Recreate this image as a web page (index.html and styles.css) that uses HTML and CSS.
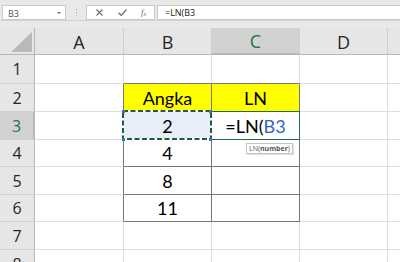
FILE: index.html
```html
<!DOCTYPE html>
<html>
<head>
<meta charset="utf-8">
<link rel="stylesheet" href="styles.css">
</head>
<body>
<div class="topbar">
  <div class="namebox"><span>B3</span><span class="caret"></span></div>
  <div class="dots"><i></i><i></i><i></i></div>
  <div class="btnbox">
    <svg class="ic" width="9" height="9" viewBox="0 0 9 9"><path d="M1.5 1.5 L7.5 7.5 M7.5 1.5 L1.5 7.5" stroke="#6b6b6b" stroke-width="1.1" fill="none"/></svg>
    <svg class="ic" width="11" height="9" viewBox="0 0 11 9"><path d="M1.5 4.8 L4.2 7.3 L9.5 1.5" stroke="#6b6b6b" stroke-width="1.2" fill="none"/></svg>
    <span class="fx">f<sub>x</sub></span>
  </div>
  <div class="formula">=LN(B3</div>
</div>
<div class="sheet">
  <div class="hd corner"><span class="tri"></span></div>
  <div class="hd col">A</div>
  <div class="hd col">B</div>
  <div class="hd col sel-col">C</div>
  <div class="hd col">D</div>
  <div class="hd col last"></div>

  <div class="hd row">1</div>
  <div class="c"></div>
  <div class="c tb-bottom"></div>
  <div class="c tb-bottom"></div>
  <div class="c"></div>
  <div class="c last"></div>

  <div class="hd row">2</div>
  <div class="c tb-right"></div>
  <div class="c tb yellow">Angka</div>
  <div class="c tb yellow">LN</div>
  <div class="c"></div>
  <div class="c last"></div>

  <div class="hd row sel-row">3</div>
  <div class="c tb-right"></div>
  <div class="c tb ref">2
    <svg class="ants" width="91" height="31" viewBox="0 0 91 31">
      <rect x="1" y="1" width="88" height="28" fill="none" stroke="#ffffff" stroke-width="2"/>
      <rect x="1" y="1" width="88" height="28" fill="none" stroke="#215c3f" stroke-width="2" stroke-dasharray="5 2.5"/>
      <rect x="0" y="0" width="3" height="3" fill="#3a6fd0"/>
      <rect x="87" y="0" width="3" height="3" fill="#3a6fd0"/>
      <rect x="0" y="28" width="3" height="3" fill="#3a6fd0"/>
      <rect x="87" y="28" width="3" height="3" fill="#3a6fd0"/>
    </svg>
  </div>
  <div class="c tb active"><span>=LN(</span><span class="blue">B3</span>
    <div class="tip">LN(<b>number</b>)</div>
  </div>
  <div class="c"></div>
  <div class="c last"></div>

  <div class="hd row">4</div>
  <div class="c tb-right"></div>
  <div class="c tb">4</div>
  <div class="c tb"></div>
  <div class="c"></div>
  <div class="c last"></div>

  <div class="hd row">5</div>
  <div class="c tb-right"></div>
  <div class="c tb">8</div>
  <div class="c tb"></div>
  <div class="c"></div>
  <div class="c last"></div>

  <div class="hd row">6</div>
  <div class="c tb-right"></div>
  <div class="c tb">11</div>
  <div class="c tb"></div>
  <div class="c"></div>
  <div class="c last"></div>

  <div class="hd row">7</div>
  <div class="c"></div>
  <div class="c"></div>
  <div class="c"></div>
  <div class="c"></div>
  <div class="c last"></div>

  <div class="hd row">8</div>
  <div class="c"></div>
  <div class="c"></div>
  <div class="c"></div>
  <div class="c"></div>
  <div class="c last"></div>
</div>
</body>
</html>
```

FILE: styles.css
```css
* { box-sizing: border-box; }
html, body {
  margin: 0;
  padding: 0;
  width: 400px;
  height: 262px;
  overflow: hidden;
  background: #ffffff;
  font-family: "Open Sans", "Noto Sans", sans-serif;
}
.topbar {
  height: 28px;
  background: #e9e9e9;
  display: flex;
  align-items: flex-start;
  padding-top: 5px;
  position: relative;
}
.topbar::after {
  content: "";
  position: absolute;
  left: 0; right: 0; top: 20px;
  height: 1px;
  background: #d4d4d4;
}
.namebox {
  margin-left: 2px;
  width: 64px;
  height: 15px;
  background: #fff;
  border: 1px solid #c9c9c9;
  display: flex;
  align-items: center;
  justify-content: space-between;
  padding: 1px 4px 0 5px;
  font-size: 9px;
  color: #555;
}
.caret {
  width: 0; height: 0;
  border-left: 2px solid transparent;
  border-right: 2px solid transparent;
  border-top: 2px solid #666;
}
.dots {
  width: 20px;
  height: 15px;
  display: flex;
  flex-direction: column;
  align-items: center;
  justify-content: center;
  gap: 2px;
}
.dots i {
  display: block;
  width: 1px;
  height: 1px;
  background: #aaa;
}
.btnbox {
  width: 69px;
  height: 15px;
  background: #fff;
  border: 1px solid #c9c9c9;
  display: flex;
  align-items: center;
  padding-left: 8px;
  gap: 13px;
}
.fx {
  font-family: "Liberation Serif", serif;
  font-style: italic;
  font-size: 9px;
  color: #666;
  line-height: 1;
}
.fx sub { font-size: 6px; vertical-align: -1px; }
.formula {
  flex: 1;
  margin-left: 2px;
  height: 15px;
  background: #fff;
  border: 1px solid #c9c9c9;
  border-right: none;
  font-size: 9px;
  color: #222;
  padding: 1px 0 0 7px;
  line-height: 12px;
}
.sheet {
  display: grid;
  grid-template-columns: 35px 89px 88px 88px 88px 1fr;
  grid-template-rows: 27px 29px 28px 28px 27px 28px 27px 28px 28px;
}
.hd {
  background: #e6e6e6;
  color: #262626;
  font-size: 16px;
  display: flex;
  align-items: center;
  justify-content: center;
  border-right: 1px solid #cfcfcf;
  border-bottom: 1px solid #cfcfcf;
}
.hd.col { padding-top: 1px; font-size: 18px; }
.hd.row { border-right-color: #b7b7b7; }
.corner { position: relative; border-right-color: #b7b7b7; border-bottom-color: #b7b7b7; }
.tri {
  position: absolute;
  right: 2px;
  bottom: 2px;
  width: 0; height: 0;
  border-left: 21px solid transparent;
  border-bottom: 20px solid #b9b9b9;
}
.hd.col { border-bottom-color: #b7b7b7; }
.sel-col {
  background: #d2d2d2;
  color: #217346;
  border-bottom: 2px solid #217346;
}
.sel-row {
  background: #d2d2d2;
  color: #217346;
  border-right: 2px solid #217346;
}
.c {
  border-right: 1px solid #dedede;
  border-bottom: 1px solid #dedede;
  font-family: Lato, "Noto Sans", sans-serif;
  font-size: 18px;
  color: #000;
  display: flex;
  align-items: center;
  justify-content: center;
  position: relative;
}
.c.last, .hd.last { border-right: none; }
.tb { border-right-color: #777; border-bottom-color: #777; }
.tb-bottom { border-bottom-color: #777; }
.tb-right { border-right-color: #777; }
.yellow { background: #ffff00; }
.ref { background: #e7eef8; }
.ants {
  position: absolute;
  left: -2px;
  top: -2px;
  z-index: 2;
}
.active::after {
  content: "";
  position: absolute;
  left: 0;
  top: -1px;
  right: -1px;
  bottom: -1px;
  border: 1px solid #1f6e43;
  border-left: none;
}
.blue { color: #2f64c8; }
.tip {
  position: absolute;
  left: 34px;
  top: 31px;
  height: 11px;
  padding: 0 2px;
  background: #fff;
  border: 1px solid #c4c4c4;
  box-shadow: 1px 1px 1px rgba(0,0,0,0.12);
  font-family: "Open Sans", sans-serif;
  font-size: 7px;
  line-height: 9px;
  color: #555;
  white-space: nowrap;
  z-index: 3;
}
.tip b { font-weight: 700; }
```
